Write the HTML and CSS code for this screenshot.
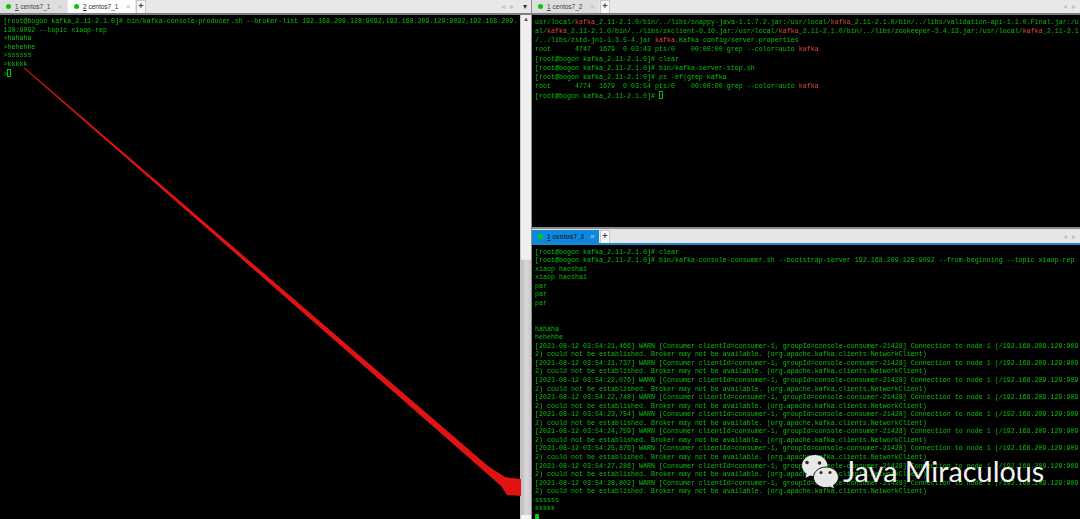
FILE: index.html
```html
<!DOCTYPE html>
<html lang="en">
<head>
<meta charset="utf-8">
<title>Xshell Kafka sessions</title>
<link rel="stylesheet" href="styles.css">
</head>
<body>
<div class="desktop">
  <section class="pane pane-left">
    <div class="tabbar">
      <div class="tab"><i class="dot"></i><span class="label"><u>1</u> centos7_1</span><span class="x">×</span></div>
      <div class="tab tab-on"><i class="dot"></i><span class="label"><u>2</u> centos7_1</span><span class="x">×</span></div>
      <div class="plus">+</div>
      <div class="nav"><span>◂</span><span>▸</span><b>▾</b></div>
    </div>
    <div class="body-row">
<pre class="term term-left">[root@bogon kafka_2.11-2.1.0]# bin/kafka-console-producer.sh --broker-list 192.168.209.128:9092,192.168.209.129:9092,192.168.209.
130:9092 --topic xiaop-rep
&gt;hahaha
&gt;hehehhe
&gt;ssssss
&gt;kkkkk
&gt;<i class="cursor"></i></pre>
      <div class="scrollbar">
        <div class="scroll-track"><span class="scroll-btn">▴</span></div>
        <div class="scroll-thumb"></div>
        <div class="scroll-end"></div>
      </div>
    </div>
  </section>
  <div class="right">
    <section class="pane pane-rt">
      <div class="tabbar">
        <div class="tab"><i class="dot"></i><span class="label"><u>1</u> centos7_2</span><span class="x">×</span></div>
        <div class="plus">+</div>
        <div class="nav"><span>◂</span><span>▸</span></div>
      </div>
<pre class="term term-rt">usr/local/<em>kafka</em>_2.11-2.1.0/bin/../libs/snappy-java-1.1.7.2.jar:/usr/local/<em>kafka</em>_2.11-2.1.0/bin/../libs/validation-api-1.1.0.Final.jar:/u
al/<em>kafka</em>_2.11-2.1.0/bin/../libs/zkclient-0.10.jar:/usr/local/<em>kafka</em>_2.11-2.1.0/bin/../libs/zookeeper-3.4.13.jar:/usr/local/<em>kafka</em>_2.11-2.1
/../libs/zstd-jni-1.3.5-4.jar <em>kafka</em>.Kafka config/server.properties
root      4747  1679  0 03:43 pts/0    00:00:00 grep --color=auto <em>kafka</em>
[root@bogon kafka_2.11-2.1.0]# clear
[root@bogon kafka_2.11-2.1.0]# bin/kafka-server-stop.sh
[root@bogon kafka_2.11-2.1.0]# ps -ef|grep kafka
root      4774  1679  0 03:54 pts/0    00:00:00 grep --color=auto <em>kafka</em>
[root@bogon kafka_2.11-2.1.0]# <i class="cursor"></i></pre>
    </section>
    <section class="pane pane-rb">
      <div class="tabbar tabbar-focus">
        <div class="tab tab-focus"><i class="dot dot-square"></i><span class="label"><u>1</u> centos7_3</span><span class="x">×</span></div>
        <div class="plus">+</div>
        <div class="nav"><span>◂</span><span>▸</span></div>
      </div>
<pre class="term term-rb">[root@bogon kafka_2.11-2.1.0]# clear
[root@bogon kafka_2.11-2.1.0]# bin/kafka-console-consumer.sh --bootstrap-server 192.168.209.128:9092 --from-beginning --topic xiaop-rep
xiaop haoshai
xiaop haoshai
par
par
par


hahaha
hehehhe
[2021-08-12 03:54:21,466] WARN [Consumer clientId=consumer-1, groupId=console-consumer-21428] Connection to node 1 (/192.168.209.129:909
2) could not be established. Broker may not be available. (org.apache.kafka.clients.NetworkClient)
[2021-08-12 03:54:21,737] WARN [Consumer clientId=consumer-1, groupId=console-consumer-21428] Connection to node 1 (/192.168.209.129:909
2) could not be established. Broker may not be available. (org.apache.kafka.clients.NetworkClient)
[2021-08-12 03:54:22,076] WARN [Consumer clientId=consumer-1, groupId=console-consumer-21428] Connection to node 1 (/192.168.209.129:909
2) could not be established. Broker may not be available. (org.apache.kafka.clients.NetworkClient)
[2021-08-12 03:54:22,748] WARN [Consumer clientId=consumer-1, groupId=console-consumer-21428] Connection to node 1 (/192.168.209.129:909
2) could not be established. Broker may not be available. (org.apache.kafka.clients.NetworkClient)
[2021-08-12 03:54:23,754] WARN [Consumer clientId=consumer-1, groupId=console-consumer-21428] Connection to node 1 (/192.168.209.129:909
2) could not be established. Broker may not be available. (org.apache.kafka.clients.NetworkClient)
[2021-08-12 03:54:24,759] WARN [Consumer clientId=consumer-1, groupId=console-consumer-21428] Connection to node 1 (/192.168.209.129:909
2) could not be established. Broker may not be available. (org.apache.kafka.clients.NetworkClient)
[2021-08-12 03:54:25,876] WARN [Consumer clientId=consumer-1, groupId=console-consumer-21428] Connection to node 1 (/192.168.209.129:909
2) could not be established. Broker may not be available. (org.apache.kafka.clients.NetworkClient)
[2021-08-12 03:54:27,286] WARN [Consumer clientId=consumer-1, groupId=console-consumer-21428] Connection to node 1 (/192.168.209.129:909
2) could not be established. Broker may not be available. (org.apache.kafka.clients.NetworkClient)
[2021-08-12 03:54:28,802] WARN [Consumer clientId=consumer-1, groupId=console-consumer-21428] Connection to node 1 (/192.168.209.129:909
2) could not be established. Broker may not be available. (org.apache.kafka.clients.NetworkClient)
ssssss
kkkkk
<i class="cursor cursor-solid"></i></pre>
    </section>
  </div>
  <svg class="arrow" viewBox="0 0 1080 519" aria-hidden="true">
    <polygon points="23.500,68 24.500,67.400 488,466 505,477 521,479 521,496 507,495 501,486 484,471" fill="#e01212"/>
  </svg>
  <div class="watermark">
    <svg class="wechat" viewBox="0 0 41 35" aria-hidden="true">
      <path d="M13.500 1C6.500 1 1 5.500 1 11.500c0 3.500 1.800 6.300 4.500 8.200L4.500 24l4.600-2.600c1.400.4 2.900.6 4.400.6 7 0 13-4.800 13-10.500S20.500 1 13.500 1z" fill="#e8e8e8"/>
      <circle cx="6" cy="8.500" r="1.800" fill="#2a2a2a"/><circle cx="18.500" cy="9" r="1.800" fill="#2a2a2a"/>
      <path d="M25 13c-6.800 0-12.500 4.500-12.500 10.300S18.200 33.600 25 33.600c1.500 0 2.800-.2 4-.6l4.500 2-1-3.800c3-1.900 5-4.600 5-7.900C37.500 17.500 31.800 13 25 13z" fill="#e8e8e8" stroke="#1a1a1a" stroke-width="1"/>
      <circle cx="20" cy="18.500" r="1.500" fill="#2a2a2a"/><circle cx="29" cy="18.500" r="1.500" fill="#2a2a2a"/>
    </svg>
    <span class="wm-text">Java Miraculous</span>
  </div>
</div>
</body>
</html>
```
FILE: styles.css
```css
* { box-sizing: border-box; }
html, body { margin: 0; padding: 0; background: #000; overflow: hidden; }
.desktop { position: relative; width: 1080px; height: 519px; display: flex; overflow: hidden; }

.pane { display: flex; flex-direction: column; min-height: 0; }
.pane-left { width: 531px; }
.right { width: 549px; border-left: 1px solid #8d8d8d; display: flex; flex-direction: column; }
.pane-rt { height: 229px; border-bottom: 2px solid #8a8a8a; }
.pane-rb { flex: 1; min-height: 0; }

.tabbar { height: 15px; flex: none; background: #e8e8e8; border-bottom: 2px solid #7d7d7d; display: flex; align-items: flex-end; }
.tabbar-focus { height: 16px; padding-top: 2px; border-bottom: 2px solid #1f87c9; background: #e6e6e6; }

.tab { width: 67px; height: 13px; margin-right: 1px; background: #dedede; display: flex; align-items: center; padding-left: 6px; font: 6.5px/13px "Liberation Sans", sans-serif; color: #444; }
.tab-on { background: #fff; color: #333; }
.tab-focus { background: #0d88dd; color: #11324a; font-weight: 700; }
.dot { width: 5px; height: 5px; border-radius: 50%; background: #0ec10e; flex: none; margin-right: 4px; }
.dot-square { border-radius: 0; background: #0abf2c; }
.label { flex: 1; white-space: nowrap; }
.x { width: 9px; font-size: 8px; color: #b8b8b8; text-align: left; }
.tab-focus .x { color: #8cc4ea; }
.plus { width: 10px; height: 13px; background: #f7f7f7; border: 1px solid #c9c9c9; border-bottom: 0; color: #444; font: 700 9px/11px "Liberation Sans", sans-serif; text-align: center; }
.nav { margin-left: auto; display: flex; gap: 3px; align-items: center; height: 13px; padding-right: 3px; color: #c2c2c2; font: 8px/13px "DejaVu Sans", sans-serif; }
.pane-left .nav { padding-right: 0; }
.nav span { width: 6px; text-align: center; }
.nav b { width: 12px; margin-left: 1px; text-align: center; color: #333; font-weight: 400; }

.body-row { flex: 1; display: flex; min-height: 0; }
.term { margin: 0; background: #000; color: #06c406; font: 6.6px "Liberation Mono", monospace; letter-spacing: .04px; overflow: hidden; white-space: pre; flex: 1; min-width: 0; min-height: 0; filter: blur(.25px); }
.term-left { padding: 3px 0 0 3.5px; line-height: 8.55px; letter-spacing: .025px; }
.term-rt { padding: 3px 0 0 3px; line-height: 9.15px; }
.term-rb { padding: 3.5px 0 0 3px; line-height: 8.56px; }
.term em { font-style: normal; color: #e54545; }
.cursor { display: inline-block; width: 4px; height: 8px; border: 1px solid #06c406; vertical-align: -1px; }
.cursor-solid { background: #0ed40e; height: 8px; vertical-align: 1px; }

.scrollbar { width: 11px; flex: none; background: #efefef; border-left: 1px solid #c5c5c5; display: flex; flex-direction: column; }
.scroll-track { flex: none; height: 244px; text-align: center; }
.scroll-btn { display: block; font: 7px/9px "DejaVu Sans", sans-serif; color: #555; }
.scroll-thumb { flex: none; height: 256px; background: linear-gradient(90deg, #b9b9b9, #d9d9d9 50%, #c9c9c9); border-top: 1px solid #e6e6e6; }
.scroll-end { flex: 1; background: #f4f4f4; }

.arrow { position: absolute; left: 0; top: 0; width: 1080px; height: 519px; pointer-events: none; }
.watermark { position: absolute; left: 801px; top: 454px; display: flex; align-items: center; gap: 1px; }
.wechat { width: 41px; height: 35px; flex: none; }
.wm-text { color: #f2f2f2; font: 400 28.8px/35px "Lato", "Open Sans", sans-serif; white-space: nowrap; }
```
